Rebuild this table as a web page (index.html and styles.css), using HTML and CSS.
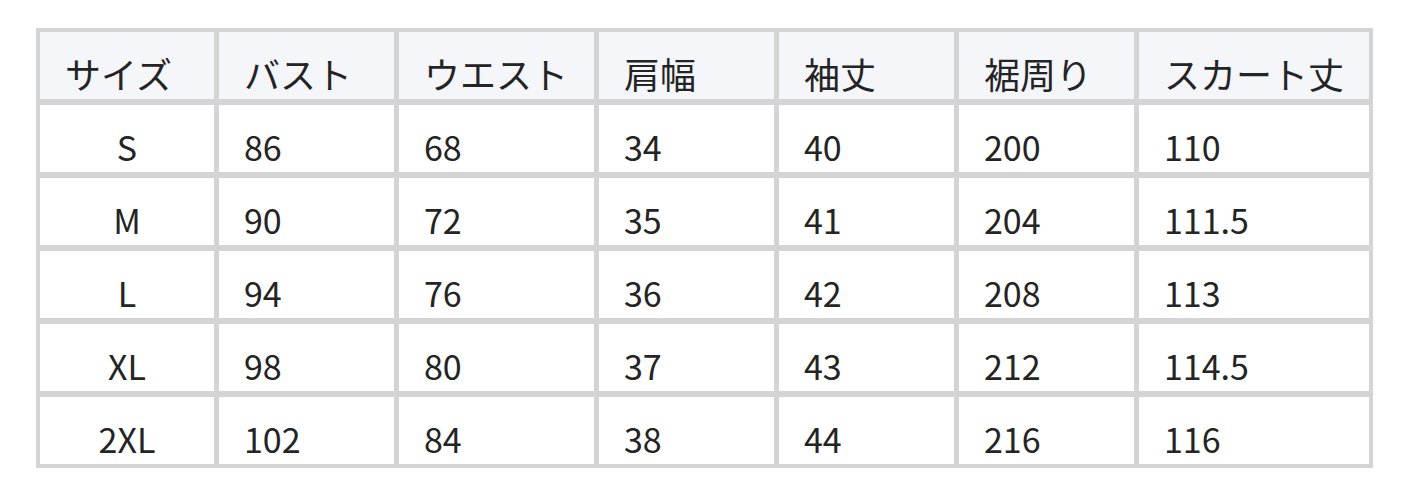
FILE: index.html
```html
<!DOCTYPE html>
<html lang="ja">
<head>
<meta charset="utf-8">
<title>サイズ表</title>
<link rel="stylesheet" href="styles.css">
</head>
<body>
<div class="page">
  <table class="size-table">
    <colgroup>
      <col class="c1"><col class="c2"><col class="c3"><col class="c4"><col class="c5"><col class="c6"><col class="c7">
    </colgroup>
    <thead>
      <tr><th>サイズ</th><th>バスト</th><th>ウエスト</th><th>肩幅</th><th>袖丈</th><th>裾周り</th><th>スカート丈</th></tr>
    </thead>
    <tbody>
      <tr><td class="size">S</td><td>86</td><td>68</td><td>34</td><td>40</td><td>200</td><td>110</td></tr>
      <tr><td class="size">M</td><td>90</td><td>72</td><td>35</td><td>41</td><td>204</td><td>111.5</td></tr>
      <tr><td class="size">L</td><td>94</td><td>76</td><td>36</td><td>42</td><td>208</td><td>113</td></tr>
      <tr><td class="size">XL</td><td>98</td><td>80</td><td>37</td><td>43</td><td>212</td><td>114.5</td></tr>
      <tr><td class="size">2XL</td><td>102</td><td>84</td><td>38</td><td>44</td><td>216</td><td>116</td></tr>
    </tbody>
  </table>
</div>
</body>
</html>
```
FILE: styles.css
```css
html, body {
  margin: 0;
  padding: 0;
  background: #ffffff;
}

.page {
  padding: 28px 0 0 36px;
}

.size-table {
  border-collapse: separate;
  border-spacing: 0;
  border: 4px solid #d4d4d4;
  table-layout: fixed;
  width: 1337px;
  font-family: "Noto Sans CJK JP", "Noto Sans", sans-serif;
  font-size: 36px;
  color: #242424;
}

.c1 { width: 179px; }
.c2 { width: 180px; }
.c3 { width: 200px; }
.c4 { width: 180px; }
.c5 { width: 180px; }
.c6 { width: 180px; }
.c7 { width: 230px; }

.size-table th,
.size-table td {
  box-sizing: content-box;
  height: 52px;
  line-height: 52px;
  padding: 15px 0 0 25px;
  text-align: left;
  font-weight: 400;
  vertical-align: bottom;
  white-space: nowrap;
  border-right: 5px solid #d4d4d4;
  border-bottom: 6px solid #d4d4d4;
}

.size-table td {
  font-size: 34px;
  height: 51px;
  line-height: 51px;
  padding-top: 16px;
}

.size-table th:last-child,
.size-table td:last-child {
  border-right: 0;
}

.size-table tbody tr:last-child td {
  border-bottom: 0;
}

.size-table th {
  background: #f5f6fa;
}

.size-table td.size {
  text-align: center;
  padding-left: 0;
}
```
